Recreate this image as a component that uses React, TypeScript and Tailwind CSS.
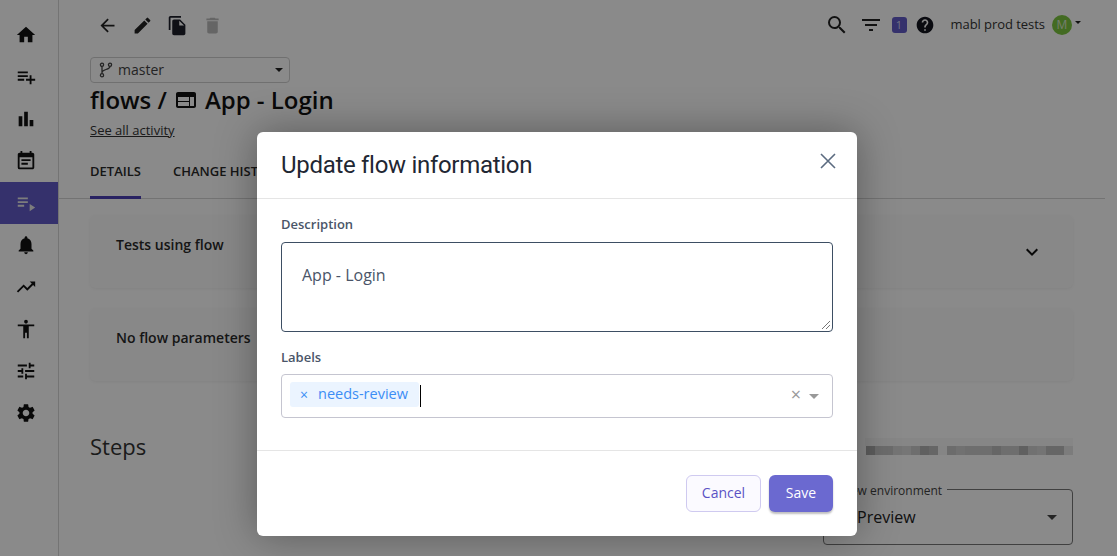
import { MdHome, MdPlaylistAdd, MdBarChart, MdEventNote, MdPlaylistPlay, MdNotifications, MdTrendingUp, MdAccessibility, MdTune, MdSettings, MdArrowBack, MdEdit, MdFileCopy, MdDelete, MdSearch, MdFilterList, MdHelp, MdWeb, MdKeyboardArrowDown } from "react-icons/md";

const navItems = [
  { icon: MdHome },
  { icon: MdPlaylistAdd },
  { icon: MdBarChart },
  { icon: MdEventNote },
  { icon: MdPlaylistPlay, active: true },
  { icon: MdNotifications },
  { icon: MdTrendingUp },
  { icon: MdAccessibility },
  { icon: MdTune },
  { icon: MdSettings },
];

// pixelated strip in the page behind the dialog
const mosaicCells = [
  0.32, 0.22, 0.22, 0.16, 0.14, 0.2, 0.3, 0.26, 0.04, 0.22, 0.18, 0.2, 0.2, 0.2, 0.26, 0.2, 0.2, 0.3, 0.18, 0.16, 0.26, 0.26, 0.1,
];

function BranchIcon() {
  return (
    <svg width="14" height="16" viewBox="0 0 14 16" fill="none" stroke="currentColor" strokeWidth="1.3">
      <circle cx="3" cy="2.8" r="1.6" />
      <circle cx="3" cy="13.2" r="1.6" />
      <circle cx="11" cy="2.8" r="1.6" />
      <path d="M3 4.4V11.6M11 4.4C11 8 3 7 3 10.5" />
    </svg>
  );
}

function Sidebar() {
  return (
    <aside className="w-[59px] shrink-0 border-r border-[#d6d6d6] pt-[14px] flex flex-col">
      {navItems.map((item, i) => {
        const Icon = item.icon;
        return (
          <div key={i} className={`h-[42px] flex items-center justify-center pr-[6px] ${item.active ? "bg-[#625bc7] text-[#e8e8e8]" : "text-[#111]"}`}>
            <Icon size={22} />
          </div>
        );
      })}
    </aside>
  );
}

function Page() {
  return (
    <main className="flex-1 min-w-0 pr-[12px]">
      <div className="flex items-center justify-between h-[50px] pl-[38px] pr-[24px]">
        <div className="flex items-center gap-[14px]">
          <MdArrowBack size={21} className="text-[#222]" />
          <MdEdit size={21} className="text-[#222]" />
          <MdFileCopy size={21} className="text-[#1c1e2a]" />
          <MdDelete size={21} className="text-[#bbb]" />
        </div>
        <div className="flex items-center">
          <MdSearch size={24} className="text-[#222]" />
          <MdFilterList size={24} className="text-[#222] ml-[10px]" />
          <span className="ml-[9px] w-[15px] h-[16px] rounded-[3px] bg-[#625bc7] text-[#d5d5f0] text-[11px] leading-[16px] text-center">1</span>
          <MdHelp size={20} className="text-[#14151f] ml-[8px]" />
          <span className="ml-[16px] text-[13px] tracking-[-0.05px] text-[#333]">mabl prod tests</span>
          <span className="ml-[7px] w-[20px] h-[20px] rounded-full bg-[#7cc63f] text-[#d9e8cc] text-[12px] leading-[20px] text-center">M</span>
          <span className="w-0 h-0 ml-[3px] mb-[6px] border-x-[3px] border-x-transparent border-t-[3px] border-t-[#222]" />
        </div>
      </div>
      <div className="pl-[31px] pr-[32px]">
        <div className="mt-[7px] w-[200px] h-[26px] border border-[#d0d0d0] rounded-[4px] flex items-center pl-[8px] pr-[6px] text-[#444]">
          <BranchIcon />
          <span className="ml-[5px] pb-[2px] text-[14px] flex-1">master</span>
          <span className="w-0 h-0 border-x-[4px] border-x-transparent border-t-[4px] border-t-[#222]" />
        </div>
        <h1 className="mt-[2px] h-[30px] flex items-center text-[24px] font-semibold text-[#111]">
          flows /
          <MdWeb size={24} className="mx-[7px]" />
          App - Login
        </h1>
        <a className="block mt-[6px] text-[13px] leading-[18px] text-[#333] underline">See all activity</a>
      </div>
      <div className="mt-[19px] h-[41px] border-b border-[#d4d4d4] pl-[31px] flex gap-[32px] text-[13px] font-semibold text-[#2a2a2a]">
        <div className="h-[41px] pt-[4px] border-b-[3px] border-[#4a3fb5] w-[51px]">DETAILS</div>
        <div className="pt-[4px] whitespace-nowrap">CHANGE HISTORY</div>
      </div>
      <div className="pl-[31px] pr-[32px]">
        <div className="mt-[16px] h-[73px] rounded-[6px] bg-[#fcfcfc] shadow-[0_1px_3px_rgba(0,0,0,0.06)] pl-[26px] pr-[29px] flex items-center justify-between text-[14px] font-semibold text-[#2a2a2a]">
          <span className="mb-[14px]">Tests using flow</span>
          <MdKeyboardArrowDown size={24} className="text-[#111]" />
        </div>
        <div className="mt-[20px] h-[73px] rounded-[6px] bg-[#fcfcfc] shadow-[0_1px_3px_rgba(0,0,0,0.06)] pl-[26px] flex items-center text-[14px] font-semibold text-[#2a2a2a]">
          <span className="mb-[14px]">No flow parameters</span>
        </div>
        <div className="flex justify-between mt-[50px]">
          <h2 className="text-[22px] leading-[30px] text-[#333]">Steps</h2>
          <div className="w-[250px]">
            <div className="mt-[7px] h-[8px] ml-[42px] bg-black/[0.03]" />
            <div className="flex justify-end h-[9px]">
              {mosaicCells.map((o, i) => (
                <div key={i} className="w-[9px] h-[9px] bg-black" style={{ opacity: o }} />
              ))}
            </div>
            <div className="mt-[34px] relative h-[56px] border border-[#777] rounded-[4px] flex items-center justify-between pl-[33px] pr-[15px] text-[16px] text-[#222]">
              <span className="absolute -top-[7px] left-[-1px] bg-white pr-[5px] text-[12px] leading-[16px] text-[#444] whitespace-nowrap">Preview environment</span>
              <span>Preview</span>
              <span className="w-0 h-0 border-x-[5px] border-x-transparent border-t-[5px] border-t-[#444]" />
            </div>
          </div>
        </div>
      </div>
    </main>
  );
}

function Dialog() {
  return (
    <div className="absolute inset-0 bg-black/[0.46] pt-[132px] pl-[257px] flex items-start">
      <div className="w-[600px] h-[404px] bg-white rounded-[6px] shadow-[0_0_40px_rgba(0,0,0,0.35)] flex flex-col">
        <div className="h-[67px] shrink-0 border-b border-[#e5e5e5] pl-[24px] pr-[21px] flex items-center justify-between">
          <h3 className="font-['Roboto',sans-serif] text-[24px] tracking-[-0.3px] text-[#1f2733]">Update flow information</h3>
          <svg width="16" height="16" viewBox="0 0 16 16" className="mb-[8px]" stroke="#5b6b80" strokeWidth="1.6" fill="none">
            <path d="M1 1L15 15M15 1L1 15" />
          </svg>
        </div>
        <div className="h-[252px] shrink-0 border-b border-[#e5e5e5] px-[24px] pt-[16px]">
          <label className="block text-[13px] leading-[18px] font-semibold text-[#4a5568]">Description</label>
          <div className="mt-[9px] relative h-[90px] border border-[#3d4e63] rounded-[4px] pl-[20px] pt-[21px] text-[16px] leading-[22px] text-[#4a5568]">
            App - Login
            <svg width="10" height="10" viewBox="0 0 10 10" className="absolute right-[1px] bottom-[1px]" stroke="#777" strokeWidth="1">
              <path d="M1 9L9 1M5 9L9 5" />
            </svg>
          </div>
          <label className="block mt-[16px] text-[13px] leading-[18px] font-semibold text-[#4a5568]">Labels</label>
          <div className="mt-[8px] h-[44px] border border-[#c5c5d0] rounded-[4px] flex items-center pl-[8px] pr-[13px]">
            <div className="mb-[4px] h-[25px] w-[129px] bg-[#ebf4ff] rounded-[3px] flex items-center text-[#3c8df5]">
              <span className="ml-[10px] text-[14px] w-[18px]">×</span>
              <span className="text-[14.5px]">needs-review</span>
            </div>
            <span className="mb-[1px] ml-[1px] w-[1px] h-[22px] bg-black" />
            <span className="mb-[4px] ml-auto text-[#999] text-[18px]">×</span>
            <span className="ml-[8px] w-0 h-0 border-x-[5px] border-x-transparent border-t-[5px] border-t-[#999]" />
          </div>
        </div>
        <div className="flex justify-end gap-[8px] px-[24px] pt-[24px]">
          <button className="w-[75px] h-[37px] pb-[2px] border border-[#cfcaf0] rounded-[6px] bg-[#fbfaff] text-[14px] text-[#5a52c5]">Cancel</button>
          <button className="w-[64px] h-[37px] pb-[2px] rounded-[6px] bg-[#6b69d0] text-white text-[14px] shadow-[0_2px_2px_rgba(0,0,0,0.25)]">Save</button>
        </div>
      </div>
    </div>
  );
}

export default function App() {
  return (
    <div className="relative w-[1117px] h-[556px] overflow-hidden flex bg-white font-['Open_Sans',sans-serif]">
      <Sidebar />
      <Page />
      <Dialog />
    </div>
  );
}
